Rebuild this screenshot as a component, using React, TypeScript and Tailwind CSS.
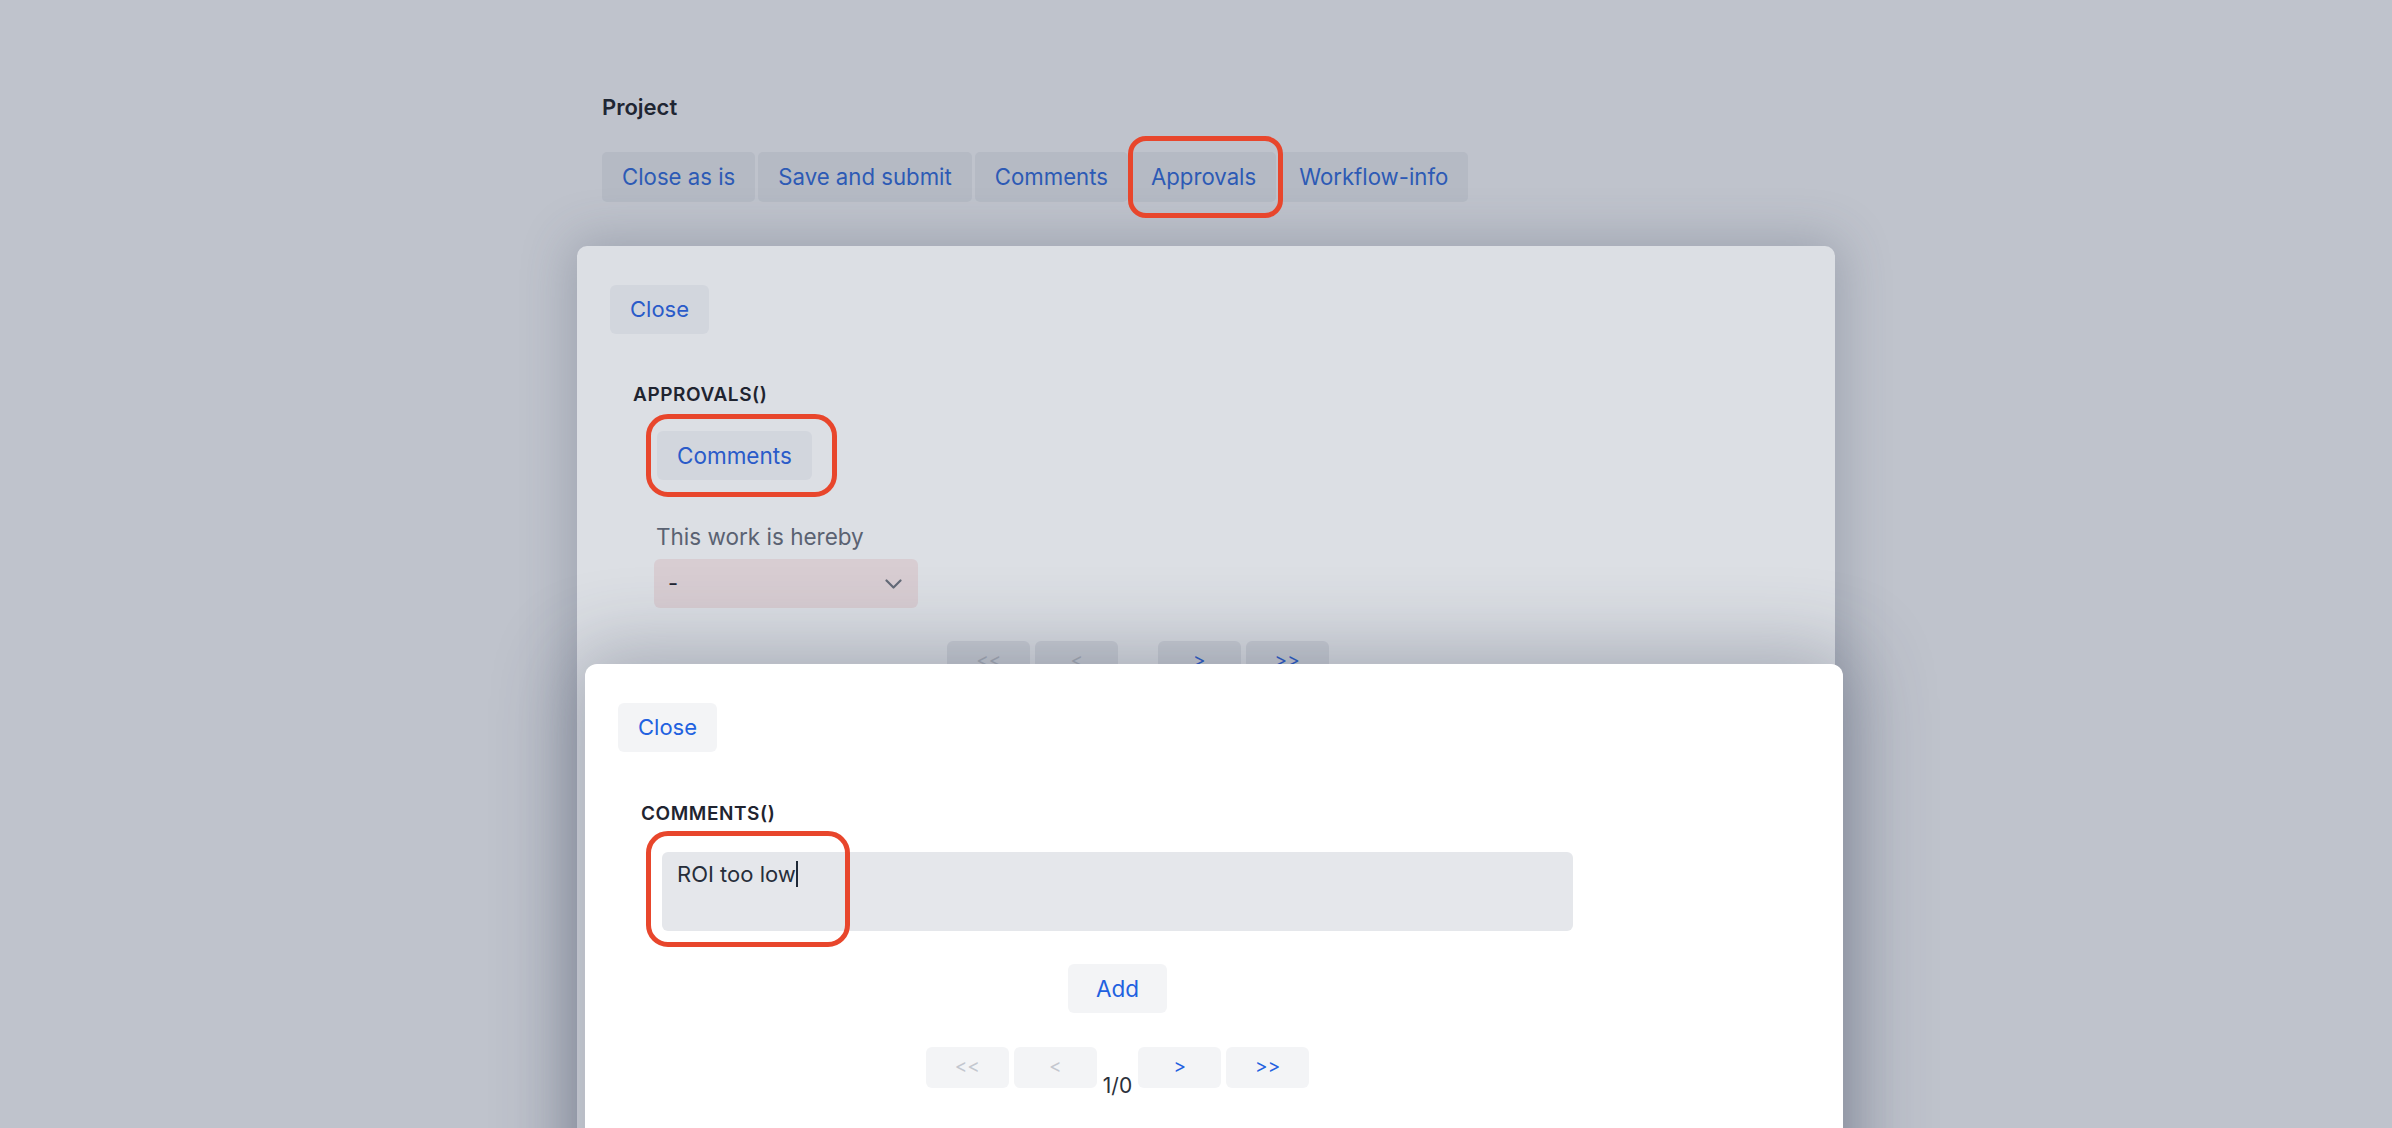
import React from "react";

const blueDim = "text-[#2d5ab5]";

function Chevron() {
  return (
    <svg width="17" height="10" viewBox="0 0 17 10" fill="none">
      <path d="M1.5 1.5l7 7 7-7" stroke="#646b78" strokeWidth="2.2" strokeLinecap="round" strokeLinejoin="round" />
    </svg>
  );
}

function Annotation({ className }: { className: string }) {
  return <div className={"pointer-events-none absolute border-[5px] border-[#e8462c] " + className} />;
}

export default function App() {
  const tabs = ["Close as is", "Save and submit", "Comments", "Approvals", "Workflow-info"];
  return (
    <div className="relative h-[1128px] w-full overflow-hidden bg-[#bfc3cc] font-['Inter','Noto_Sans',sans-serif]">
      {/* page */}
      <div className="mx-auto w-[1188px] pt-[92px]">
        <h1 className="text-[22px] font-semibold leading-[30px] text-[#1f2633]">Project</h1>
        <div className="mt-[30px] flex gap-[3px]">
          {tabs.map((t) => (
            <button
              key={t}
              className={"h-[50px] rounded-[5px] bg-[#b5bac4] px-[20px] text-[22.2px] leading-[30px] " + blueDim}
            >
              {t}
            </button>
          ))}
        </div>
      </div>

      {/* modal 1 (under the second modal) */}
      <div className="absolute left-[577px] top-[246px] h-[1000px] w-[1258px] rounded-[10px] bg-[#dcdfe4] shadow-[0_0_50px_6px_rgba(70,80,100,0.28)]">
        <div className="pl-[33px] pt-[39px]">
          <button className="h-[49px] rounded-[6px] bg-[#d2d6dd] px-[20px] text-[22px] leading-[33px] text-[#2a5bc9]">
            Close
          </button>
          <div className="ml-[23px] mt-[47px] w-[1010px]">
            <h2 className="text-[19px] font-semibold leading-[28px] tracking-[0.03em] text-[#1f2430]">APPROVALS()</h2>
            <button className="ml-[24px] mt-[22px] h-[49px] rounded-[6px] bg-[#d2d6dd] px-[20px] text-[22.5px] leading-[33px] text-[#2a5bc9]">
              Comments
            </button>
            <div className="ml-[23px] mt-[40px] text-[22.5px] leading-[33px] text-[#5a6272]">This work is hereby</div>
            <div className="ml-[21px] mt-[6px] flex h-[49px] w-[264px] items-center justify-between rounded-[6px] bg-[#d8cdd2] pl-[14px] pr-[16px] text-[22px] text-[#1f2633]">
              <span>-</span>
              <Chevron />
            </div>
            <div className="mt-[33px] flex justify-center gap-[5px]">
              <button className="h-[41px] w-[83px] rounded-[6px] bg-[#cbcfd6] text-[19px] text-[#a9aeb8]">&lt;&lt;</button>
              <button className="h-[41px] w-[83px] rounded-[6px] bg-[#cbcfd6] text-[19px] text-[#a9aeb8]">&lt;</button>
              <span className="mt-[23px] text-[21px] leading-[31px] text-[#2b303a]">1/0</span>
              <button className="h-[41px] w-[83px] rounded-[6px] bg-[#cbcfd6] text-[19px] text-[#2a5bc9]">&gt;</button>
              <button className="h-[41px] w-[83px] rounded-[6px] bg-[#cbcfd6] text-[19px] text-[#2a5bc9]">&gt;&gt;</button>
            </div>
          </div>
        </div>
      </div>

      {/* modal 2 (on top) */}
      <div className="absolute left-[585px] top-[664px] h-[620px] w-[1258px] rounded-[12px] bg-white shadow-[0_0_80px_14px_rgba(50,60,85,0.32)]">
        <div className="pl-[33px] pt-[39px]">
          <button className="h-[49px] rounded-[6px] bg-[#f3f4f6] px-[20px] text-[22px] leading-[33px] text-[#2161e0]">
            Close
          </button>
          <div className="ml-[23px] mt-[48px] w-[953px]">
            <h2 className="text-[19px] font-semibold leading-[28px] tracking-[0.03em] text-[#1f2430]">COMMENTS()</h2>
            <div className="ml-[21px] mt-[24px] h-[79px] w-[911px] rounded-[6px] bg-[#e5e7eb] px-[15px] pt-[6px] text-[22px] leading-[33px] text-[#272e3a]">
              ROI too low
              <span className="inline-block h-[26px] w-[2px] bg-[#1f2937] align-[-5px]" />
            </div>
            <div className="mt-[33px] flex justify-center">
              <button className="h-[49px] w-[99px] rounded-[6px] bg-[#f3f4f6] text-[22.5px] leading-[33px] text-[#2161e0]">
                Add
              </button>
            </div>
            <div className="mt-[34px] flex justify-center gap-[5px]">
              <button className="h-[41px] w-[83px] rounded-[6px] bg-[#f3f4f6] text-[19px] text-[#c3c7cf]">&lt;&lt;</button>
              <button className="h-[41px] w-[83px] rounded-[6px] bg-[#f3f4f6] text-[19px] text-[#c3c7cf]">&lt;</button>
              <span className="mx-[1px] mt-[23px] text-[21px] leading-[31px] text-[#2b303a]">1/0</span>
              <button className="h-[41px] w-[83px] rounded-[6px] bg-[#f3f4f6] text-[19px] text-[#2161e0]">&gt;</button>
              <button className="h-[41px] w-[83px] rounded-[6px] bg-[#f3f4f6] text-[19px] text-[#2161e0]">&gt;&gt;</button>
            </div>
          </div>
        </div>
      </div>

      {/* annotations */}
      <Annotation className="left-[1128px] top-[136px] h-[82px] w-[155px] rounded-[18px]" />
      <Annotation className="left-[646px] top-[414px] h-[83px] w-[191px] rounded-[22px]" />
      <Annotation className="left-[646px] top-[831px] h-[116px] w-[204px] rounded-[22px]" />
    </div>
  );
}
